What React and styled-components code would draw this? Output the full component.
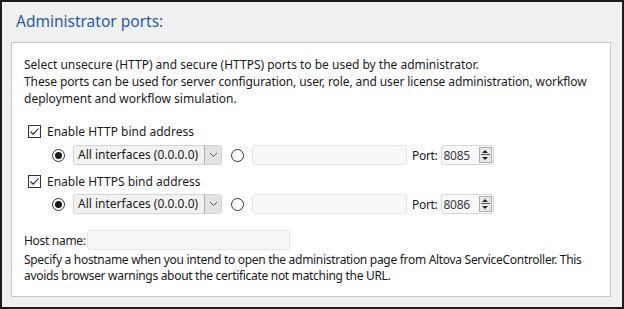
import styled, { createGlobalStyle } from 'styled-components';

const GlobalStyle = createGlobalStyle`
  html, body {
    margin: 0;
    padding: 0;
    background: #f0f0f0;
  }
  * {
    box-sizing: border-box;
  }
`;

const Frame = styled.div`
  width: 624px;
  height: 309px;
  border: 2px solid #1c1c1c;
  background: #f0f0f0;
  padding: 8px 11px 0 9px;
  font-family: 'Noto Sans', 'Segoe UI', sans-serif;
  font-size: 12px;
  color: #1a1a1a;
`;

const Title = styled.h2`
  margin: 0 0 10px 5px;
  font-family: 'Noto Sans', 'Segoe UI', sans-serif;
  font-weight: 400;
  font-size: 15.5px;
  line-height: 22px;
  color: #245fa8;
`;

const Panel = styled.section`
  width: 600px;
  height: 255px;
  background: #fff;
  border: 1px solid #c9c9c9;
  padding: 13px 12px 0 12px;
  display: flex;
  flex-direction: column;
`;

const Para = styled.p`
  margin: ${(p) => p.$mt || 0}px 0 0 0;
  line-height: ${(p) => p.$lh || 17}px;
  letter-spacing: ${(p) => p.$ls || 0}px;
  white-space: nowrap;
`;

const Tight = styled.span`
  letter-spacing: -0.1px;
`;

const Row = styled.div`
  display: flex;
  align-items: center;
  height: 20px;
  margin-top: ${(p) => p.$mt || 0}px;
  padding-left: ${(p) => p.$indent || 0}px;
`;

const CheckBox = styled.span`
  width: 13px;
  height: 13px;
  border: 1px solid #333;
  background: #fff;
  display: inline-flex;
  align-items: center;
  justify-content: center;
  margin-right: 6px;
`;

const Radio = styled.span`
  width: 13px;
  height: 13px;
  border-radius: 50%;
  border: 1px solid #333;
  background: #fff;
  display: inline-flex;
  align-items: center;
  justify-content: center;
  margin-right: ${(p) => p.$mr || 8}px;
  &::after {
    content: '';
    width: 7px;
    height: 7px;
    border-radius: 50%;
    background: ${(p) => (p.$on ? '#1a1a1a' : 'transparent')};
  }
`;

const Select = styled.div`
  width: 149px;
  height: 20px;
  display: flex;
  border: 1px solid #d4d4d4;
  border-radius: 3px;
  background: #f2f2f2;
  overflow: hidden;
  margin-right: 9px;
`;

const SelectText = styled.span`
  flex: 1;
  padding-left: 4px;
  line-height: 18px;
  color: #1a1a1a;
`;

const SelectButton = styled.span`
  width: 17px;
  border-left: 1px solid #adadad;
  background: #e3e3e3;
  display: flex;
  align-items: center;
  justify-content: center;
`;

const TextBox = styled.div`
  width: ${(p) => p.$w}px;
  height: 20px;
  border: 1px solid #e4e4e4;
  border-radius: 3px;
  background: #f8f8f8;
  margin-right: ${(p) => p.$mr || 0}px;
`;

const Label = styled.span`
  margin-right: ${(p) => p.$mr || 0}px;
  letter-spacing: -0.3px;
`;

const PortBox = styled.div`
  width: 53px;
  height: 20px;
  border: 1px solid #d8d8d8;
  border-radius: 3px;
  background: #f8f8f8;
  display: flex;
  align-items: center;
  padding-left: 2px;
`;

const PortValue = styled.span`
  flex: 1;
  color: #3b3a44;
  letter-spacing: -0.3px;
`;

const Spinner = styled.span`
  width: 13px;
  height: 16px;
  margin-right: 1px;
  border: 1px solid #adadad;
  background: #e8e8e8;
  display: flex;
  flex-direction: column;
  align-items: center;
  justify-content: space-around;
  position: relative;
  &::before {
    content: '';
    border-left: 3px solid transparent;
    border-right: 3px solid transparent;
    border-bottom: 3px solid #222;
  }
  &::after {
    content: '';
    border-left: 3px solid transparent;
    border-right: 3px solid transparent;
    border-top: 3px solid #222;
  }
`;

const SpinDivider = styled.span`
  position: absolute;
  left: 1px;
  right: 1px;
  top: 6px;
  height: 1px;
  background: #555;
`;

function Check() {
  return (
    <CheckBox>
      <svg width="11" height="11" viewBox="0 0 11 11">
        <path d="M1.5 5.5 L4.2 8.2 L9.5 2.5" fill="none" stroke="#222" strokeWidth="1.1" />
      </svg>
    </CheckBox>
  );
}

function Chevron() {
  return (
    <svg width="9" height="6" viewBox="0 0 9 6">
      <path d="M1 1 L4.5 4.5 L8 1" fill="none" stroke="#555" strokeWidth="1" />
    </svg>
  );
}

function BindRow({ port, mt }) {
  return (
    <Row $mt={mt} $indent={28}>
      <Radio $on />
      <Select>
        <SelectText>All interfaces (0.0.0.0)</SelectText>
        <SelectButton>
          <Chevron />
        </SelectButton>
      </Select>
      <Radio />
      <TextBox $w={155} $mr={5} />
      <Label $mr={3}>Port:</Label>
      <PortBox>
        <PortValue>{port}</PortValue>
        <Spinner>
          <SpinDivider />
        </Spinner>
      </PortBox>
    </Row>
  );
}

export default function App() {
  return (
    <>
      <GlobalStyle />
      <Frame>
        <Title>Administrator ports:</Title>
        <Panel>
          <Para>
            Select unsecure (HTTP) and secure (HTTPS) ports to be used by the administrator.
            <br />
            <Tight>
              These ports can be used for server configuration, user, role, and user license
              administration, workflow
            </Tight>
            <br />
            deployment and workflow simulation.
          </Para>
          <Row $mt={14} $indent={4}>
            <Check />
            <span>Enable HTTP bind address</span>
          </Row>
          <BindRow port="8085" mt={4} />
          <Row $mt={6} $indent={4}>
            <Check />
            <span>Enable HTTPS bind address</span>
          </Row>
          <BindRow port="8086" mt={3} />
          <Row $mt={16}>
            <Label $mr={1}>Host name:</Label>
            <TextBox $w={203} />
          </Row>
          <Para $mt={2} $lh={16} $ls={-0.3}>
            Specify a hostname when you intend to open the administration page from Altova
            ServiceController. This
            <br />
            avoids browser warnings about the certificate not matching the URL.
          </Para>
        </Panel>
      </Frame>
    </>
  );
}
